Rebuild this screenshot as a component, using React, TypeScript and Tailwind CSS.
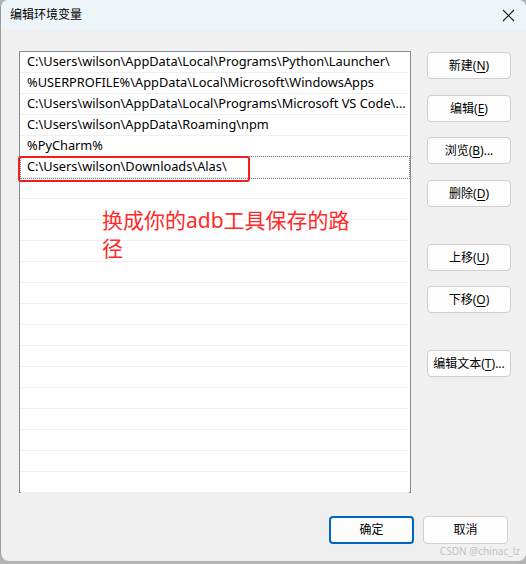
import React from "react";

const rows = [
  "C:\\Users\\wilson\\AppData\\Local\\Programs\\Python\\Launcher\\",
  "%USERPROFILE%\\AppData\\Local\\Microsoft\\WindowsApps",
  "C:\\Users\\wilson\\AppData\\Local\\Programs\\Microsoft VS Code\\bin",
  "C:\\Users\\wilson\\AppData\\Roaming\\npm",
  "%PyCharm%",
  "C:\\Users\\wilson\\Downloads\\Alas\\",
];

const font = { fontFamily: '"Noto Sans", "Noto Sans CJK SC", sans-serif' };

function Btn({ label, mnemonic, suffix, className }: { label: string; mnemonic?: string; suffix?: string; className?: string }) {
  return (
    <div
      className={
        "w-[84px] h-[27px] flex items-center justify-center rounded-[4px] border border-[#d0d0d0] bg-[#fdfdfd] text-[12px] text-black " +
        (className ?? "")
      }
    >
      <span>
        {label}
        {mnemonic !== undefined && (
          <>
            (<span className="underline underline-offset-2">{mnemonic}</span>)
          </>
        )}
        {suffix}
      </span>
    </div>
  );
}

export default function App() {
  const all = Array.from({ length: 21 }, (_, i) => rows[i] ?? "");
  return (
    <div className="w-[526px] h-[564px] bg-[#b4b4b4] overflow-hidden" style={font}>
      <div className="relative w-[526px] h-[561px] bg-[#f0f0f0] rounded-t-[8px] rounded-b-[8px] border-l border-[#9a9a9a] flex flex-col overflow-hidden">
        <div className="h-[30px] bg-[#eef5f9] flex items-center justify-between pl-[9px] pr-[11px] shrink-0">
          <span className="text-[12px] text-black">编辑环境变量</span>
          <svg width="13" height="13" viewBox="0 0 13 13">
            <path d="M1 1 L12 12 M12 1 L1 12" stroke="#1a1a1a" strokeWidth="1.1" />
          </svg>
        </div>
        <div className="flex pl-[18px] pt-[21px]">
          <div className="relative w-[392px] h-[442px] border border-[#868a91] bg-white">
            <div className="flex flex-col">
              {all.map((t, i) => (
                <div key={i} className="h-[21px] px-[1px]">
                  <div
                    className={
                      "h-full flex items-center pl-[6px] pr-[1px] border-b border-[#efefef] text-[12.8px] text-black whitespace-nowrap overflow-hidden " +
                      (i === 5 ? "outline outline-1 outline-dotted outline-[#777]" : "")
                    }
                  >
                    <span className="min-w-0 truncate">{t}</span>
                  </div>
                </div>
              ))}
            </div>
            <div className="absolute left-[-2px] top-[104px] w-[232px] h-[26px] border-2 border-[#f02020] rounded-[3px]" />
            <div className="absolute left-[82px] top-[154px] w-[262px] text-[21px] leading-[28px] text-[#ff2a2a]">
              换成你的adb工具保存的路径
            </div>
          </div>
          <div className="flex flex-col ml-[16px] pt-[1px]">
            <Btn label="新建" mnemonic="N" />
            <Btn label="编辑" mnemonic="E" className="mt-[16px]" />
            <Btn label="浏览" mnemonic="B" suffix="..." className="mt-[15px]" />
            <Btn label="删除" mnemonic="D" className="mt-[16px]" />
            <Btn label="上移" mnemonic="U" className="mt-[37px]" />
            <Btn label="下移" mnemonic="O" className="mt-[15px]" />
            <Btn label="编辑文本" mnemonic="T" suffix="..." className="mt-[37px]" />
          </div>
        </div>
        <div className="flex justify-end gap-[9px] pr-[18px] mt-[23px]">
          <div className="w-[85px] h-[28px] flex items-center justify-center rounded-[4px] border-2 border-[#0067c0] bg-[#fdfdfd] text-[12px] text-black">
            确定
          </div>
          <div className="w-[85px] h-[28px] flex items-center justify-center rounded-[4px] border border-[#d0d0d0] bg-[#fdfdfd] text-[12px] text-black">
            取消
          </div>
        </div>
        <div className="absolute right-[6px] bottom-[2px] text-[10px] text-[#c4c4c4]">CSDN @chinac_lz</div>
      </div>
    </div>
  );
}
